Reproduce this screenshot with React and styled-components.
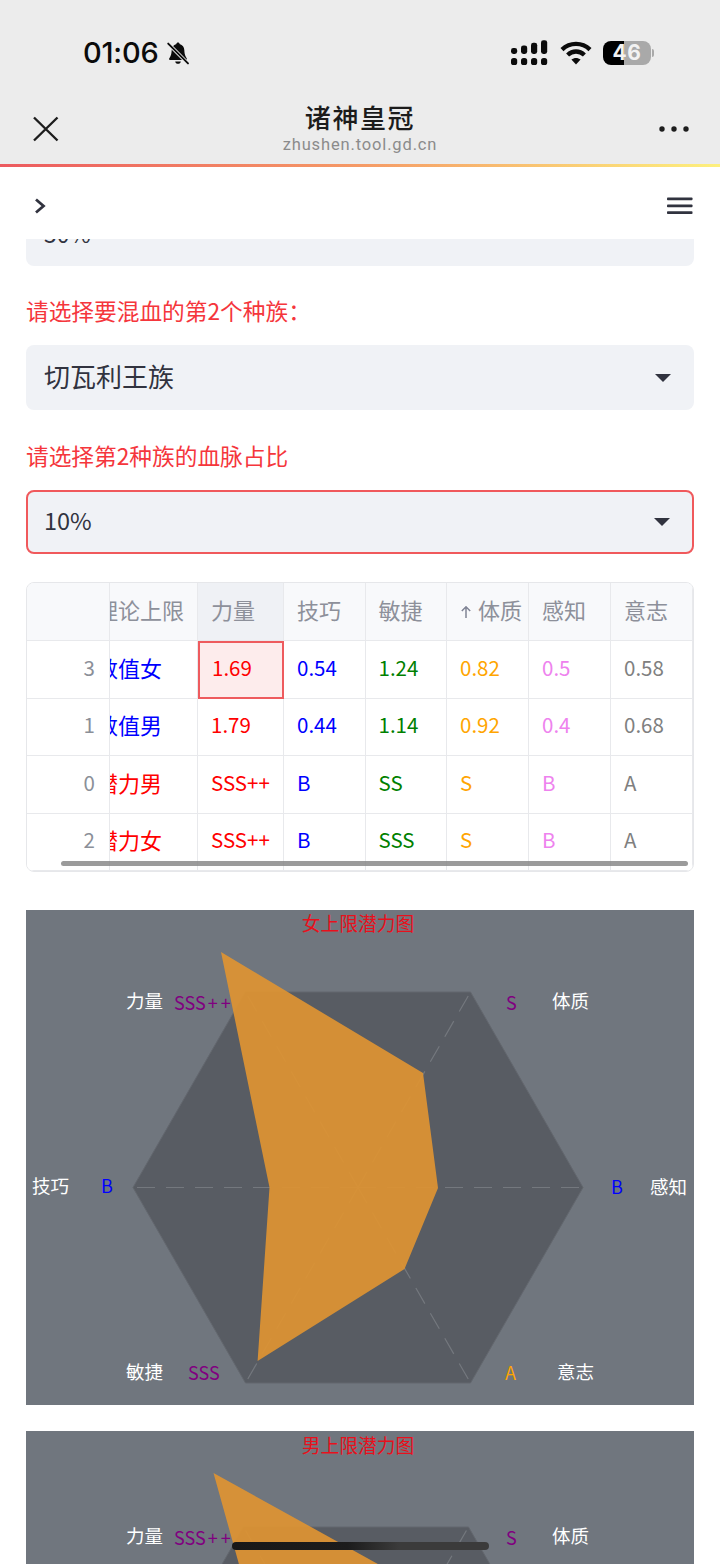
import React from 'react';
import styled, { createGlobalStyle } from 'styled-components';

const FONT = '"Noto Sans CJK SC", "Noto Sans", sans-serif';

const Global = createGlobalStyle`
  html, body { margin: 0; padding: 0; background: #fff; }
  body { font-family: ${FONT}; }
`;

const Page = styled.div`
  position: relative;
  width: 720px;
  height: 1564px;
  overflow: hidden;
  background: #fff;
  display: flex;
  flex-direction: column;
`;

const Chrome = styled.header`
  background: #ececec;
  flex: none;
`;
const StatusBar = styled.div`
  height: 96px;
  box-sizing: border-box;
  padding: 10px 66px 0 83px;
  display: flex;
  align-items: center;
  justify-content: space-between;
`;
const TimeGroup = styled.div`
  display: flex;
  align-items: center;
  gap: 7px;
`;
const Time = styled.span`
  font-family: Inter, sans-serif;
  font-weight: 500;
  font-size: 29px;
  line-height: 34px;
  letter-spacing: -0.2px;
  color: #0b0b0b;
`;
const StatusIcons = styled.div`
  display: flex;
  align-items: center;
  gap: 12px;
`;
const Battery = styled.div`
  position: relative;
  width: 48px;
  height: 24px;
  border-radius: 8px;
  overflow: hidden;
  background: linear-gradient(90deg, #000 0 21px, #a9a9a9 21px 100%);
  display: flex;
  align-items: center;
  justify-content: center;
  font-family: Inter, sans-serif;
  font-weight: 700;
  font-size: 21px;
  line-height: 24px;
  color: #f2f2f2;
  letter-spacing: 0.5px;
`;
const BatteryWrap = styled.div`
  display: flex;
  align-items: center;
  gap: 1px;
  margin-left: -1px;
`;
const BatteryCap = styled.div`
  width: 2px;
  height: 8px;
  border-radius: 0 2px 2px 0;
  background: #a9a9a9;
`;

const NavBar = styled.div`
  height: 68px;
  box-sizing: border-box;
  padding: 0 31px 2px 33px;
  display: flex;
  align-items: center;
  justify-content: space-between;
`;
const NavTitle = styled.div`
  display: flex;
  flex-direction: column;
  align-items: center;
  margin-left: 2px;
`;
const SiteName = styled.div`
  font-size: 26px;
  line-height: 34px;
  font-weight: 500;
  letter-spacing: 1.6px;
  color: #1c1c1c;
  margin-top: -4px;
`;
const SiteUrl = styled.div`
  font-family: Roboto, sans-serif;
  font-size: 16.5px;
  line-height: 20px;
  letter-spacing: 0.85px;
  color: #8b8b8b;
  margin-top: 1px;
`;
const ProgressLine = styled.div`
  height: 3px;
  flex: none;
  background: linear-gradient(90deg, #ec5a5f 0%, #f59a66 50%, #fdf07e 100%);
`;

const AppBar = styled.div`
  height: 72px;
  flex: none;
  box-sizing: border-box;
  padding: 6px 27px 0 34px;
  display: flex;
  align-items: center;
  justify-content: space-between;
  background: #fff;
`;

const Main = styled.main`
  padding: 0 26px;
  display: flex;
  flex-direction: column;
`;
const Clip = styled.div`
  height: 27px;
  overflow: hidden;
  display: flex;
  align-items: flex-end;
`;
const Select = styled.div`
  flex: none;
  width: 100%;
  box-sizing: border-box;
  height: ${p => p.$h || 65}px;
  padding: 0 ${p => (p.$active ? 22 : 23)}px 4px ${p => (p.$active ? 16 : 18)}px;
  border-radius: 8px;
  background: #f0f2f6;
  border: ${p => (p.$active ? '2px solid #f0595c' : 'none')};
  display: flex;
  align-items: center;
  justify-content: space-between;
  color: #31333f;
  font-size: ${p => p.$size || 26}px;
  line-height: 34px;
`;
const Caret = styled.span`
  width: 0;
  height: 0;
  margin-top: 4px;
  border-left: 8px solid transparent;
  border-right: 8px solid transparent;
  border-top: 8px solid #31333f;
`;
const Label = styled.div`
  margin-top: ${p => p.$top}px;
  margin-bottom: 19px;
  height: 28px;
  font-size: 22.7px;
  line-height: 26px;
  color: #f5363c;
  white-space: nowrap;
`;

const TableFrame = styled.div`
  position: relative;
  margin-top: 28px;
  height: 290px;
  box-sizing: border-box;
  border: 1px solid #e6e7ea;
  border-radius: 8px;
  overflow: hidden;
`;
const Grid = styled.div`
  display: grid;
  grid-template-columns: 83px 88px 86px 81.5px 81.5px 82px 82px 81.5px;
  grid-template-rows: 58px repeat(4, 57.5px);
`;
const Cell = styled.div`
  box-sizing: border-box;
  display: flex;
  align-items: center;
  justify-content: ${p => (p.$right ? 'flex-end' : 'flex-start')};
  padding: 0 ${p => (p.$right ? 14 : 0)}px 5px ${p => (p.$right ? 0 : 13)}px;
  border-right: 1.5px solid #e8e9ec;
  border-bottom: 1.5px solid #e8e9ec;
  white-space: nowrap;
  overflow: hidden;
  color: ${p => p.$color || '#31333f'};
  font-size: ${p => p.$size || 20.5}px;
  line-height: 30px;
  background: ${p => p.$bg || '#fff'};
`;
const SelectedCell = styled(Cell)`
  background: #fdecec;
  border: 2px solid #ee5b5e;
  padding-left: 12px;
`;
const NameCell = styled(Cell)`
  padding-left: 0;
  font-size: 22px;
  & > span { margin-left: -14px; flex: none; }
`;
const Scrollbar = styled.div`
  position: absolute;
  left: 34px;
  right: 5px;
  bottom: 5px;
  height: 5px;
  border-radius: 3px;
  background: rgba(130, 130, 130, 0.8);
`;

const ChartPanel = styled.section`
  flex: none;
  height: 495px;
  margin-top: ${p => p.$top}px;
  background: #70767e;
  & > svg { display: block; }
`;
const HomeBar = styled.div`
  position: absolute;
  left: 232px;
  top: 1542px;
  width: 257px;
  height: 8px;
  border-radius: 4px;
  background: linear-gradient(90deg, #181818 0%, #1c1c1c 45%, #3b3b3b 65%, #3b3b3b 100%);
`;

const BellOff = () => (
  <svg width="24" height="24" viewBox="0 0 24 24">
    <path d="M12 1.5c.9 0 1.5.6 1.6 1.4 3 .8 4.6 3.2 4.7 6.2.1 3 .6 5.3 1.6 6.8.7 1 1 1.5 1 2 0 .7-.5 1.1-1.3 1.1H4.4c-.8 0-1.3-.4-1.3-1.1 0-.5.3-1 1-2 1-1.5 1.5-3.8 1.6-6.8.1-3 1.7-5.4 4.7-6.2.1-.8.7-1.4 1.6-1.4Z" fill="#0b0b0b" />
    <path d="M9.2 20.4h5.6c-.2 1.4-1.4 2.3-2.8 2.3s-2.6-.9-2.8-2.3Z" fill="#0b0b0b" />
    <path d="M1.8 2.2 22 22.4" stroke="#ececec" strokeWidth="3.6" />
    <path d="M2.2 2.6 22 22.4" stroke="#0b0b0b" strokeWidth="1.9" strokeLinecap="round" />
  </svg>
);

const Signal = () => (
  <svg width="37" height="26" viewBox="0 0 37 26">
    {[0, 10, 20, 30].map((x, i) => (
      <g key={x} fill="#0b0b0b">
        <rect x={x} y={8 - i * 2.6} width="6.2" height={6 + i * 2.6} rx="2.4" />
        <rect x={x} y="18" width="6.2" height="7" rx="2.6" />
      </g>
    ))}
  </svg>
);

const Wifi = () => (
  <svg width="32" height="24" viewBox="0 0 32 24" fill="none" stroke="#0b0b0b" strokeWidth="4.4">
    <path d="M2 8.6C10 1 22 1 30 8.6" />
    <path d="M7.6 14c5-4.6 11.8-4.6 16.8 0" />
    <path d="M16 23.5 11.4 18.6c2.7-2.2 6.5-2.2 9.2 0Z" fill="#0b0b0b" stroke="none" />
  </svg>
);

const CloseIcon = () => (
  <svg width="26" height="26" viewBox="0 0 26 26" fill="none" stroke="#1d1d1d" strokeWidth="2.4">
    <path d="M1 1.5 24.5 24.5M24.5 1.5 1 24.5" />
  </svg>
);

const MoreIcon = () => (
  <svg width="30" height="6" viewBox="0 0 30 6" fill="#1d1d1d">
    <circle cx="3" cy="3" r="2.7" />
    <circle cx="15" cy="3" r="2.7" />
    <circle cx="27" cy="3" r="2.7" />
  </svg>
);

const ChevronIcon = () => (
  <svg width="12" height="16" viewBox="0 0 12 16" fill="none" stroke="#31333f" strokeWidth="2.8">
    <path d="M2 1.5 9.5 8 2 14.5" />
  </svg>
);

const MenuIcon = () => (
  <svg width="26" height="18" viewBox="0 0 26 18" fill="#31333f">
    <rect x="0" y="0.5" width="25.5" height="2.8" rx="0.8" />
    <rect x="0" y="7.4" width="25.5" height="2.8" rx="0.8" />
    <rect x="0" y="14.3" width="25.5" height="2.8" rx="0.8" />
  </svg>
);

const SortIcon = styled.svg`
  margin: 5px 6px 0 0;
  flex: none;
`;
const SortArrow = () => (
  <SortIcon width="12" height="14" viewBox="0 0 12 14" fill="none" stroke="#808495" strokeWidth="1.5">
    <path d="M6 13V2M1.8 6 6 1.8 10.2 6" />
  </SortIcon>
);

const C = { red: '#ff0000', blue: '#0000ff', green: '#008000', orange: '#ffa500', pink: '#ee82ee', gray: '#808080' };
const colors = [C.red, C.blue, C.green, C.orange, C.pink, C.gray];
const headers = ['力量', '技巧', '敏捷', '体质', '感知', '意志'];
const rows = [
  { idx: 3, name: '数值女', color: C.blue, vals: ['1.69', '0.54', '1.24', '0.82', '0.5', '0.58'], sel: true },
  { idx: 1, name: '数值男', color: C.blue, vals: ['1.79', '0.44', '1.14', '0.92', '0.4', '0.68'] },
  { idx: 0, name: '潜力男', color: C.red, vals: ['SSS++', 'B', 'SS', 'S', 'B', 'A'] },
  { idx: 2, name: '潜力女', color: C.red, vals: ['SSS++', 'B', 'SSS', 'S', 'B', 'A'] },
];

const HEAD_BG = '#f8f9fb';
const HEAD_FG = '#8d909a';

const DataTable = () => (
  <TableFrame>
    <Grid>
      <Cell $bg={HEAD_BG} />
      <NameCell $bg={HEAD_BG} $color={HEAD_FG}><span>理论上限</span></NameCell>
      {headers.map((h, i) => (
        <Cell key={h} $bg={i === 0 ? '#eff1f5' : HEAD_BG} $color={HEAD_FG} $size={22}>
          {h === '体质' && <SortArrow />}
          {h}
        </Cell>
      ))}
      {rows.map(r => (
        <React.Fragment key={r.idx}>
          <Cell $right $color="#8b8f98">{r.idx}</Cell>
          <NameCell $color={r.color}><span>{r.name}</span></NameCell>
          {r.vals.map((v, i) =>
            r.sel && i === 0 ? (
              <SelectedCell key={i} $color={colors[i]}>{v}</SelectedCell>
            ) : (
              <Cell key={i} $color={colors[i]}>{v}</Cell>
            )
          )}
        </React.Fragment>
      ))}
    </Grid>
    <Scrollbar />
  </TableFrame>
);

const WHITE = '#ffffff';
const PURPLE = '#800080';

const ChartText = styled.text`
  font-family: ${FONT};
  font-size: ${p => p.$size || 18}px;
`;

const Radar = ({ title, cx, cy, rx, ry, poly, titleY }) => {
  const verts = [
    [cx - rx / 2, cy - ry], [cx + rx / 2, cy - ry], [cx + rx, cy],
    [cx + rx / 2, cy + ry], [cx - rx / 2, cy + ry], [cx - rx, cy],
  ];
  const top = cy - ry;
  const labels = [
    [100, top + 16, '力量', WHITE, 18.5],
    [526, top + 16, '体质', WHITE, 18.5],
    [480, top + 18, 'S', PURPLE, 18],
    [6, cy + 5, '技巧', WHITE, 18.5],
    [75, cy + 5, 'B', C.blue, 18],
    [624, cy + 6, '感知', WHITE, 18.5],
    [585, cy + 6, 'B', C.blue, 18],
    [100, cy + 191, '敏捷', WHITE, 18.5],
    [162, cy + 192, 'SSS', PURPLE, 18],
    [531, cy + 191, '意志', WHITE, 18.5],
    [479, cy + 192, 'A', C.orange, 18],
  ];
  return (
    <svg width="668" height="495" viewBox="0 0 668 495">
      <polygon points={verts.map(v => v.join(',')).join(' ')} fill="#585c63" stroke="#63676e" strokeWidth="1" />
      {verts.map((v, i) => (
        <line key={i} x1={cx} y1={cy} x2={v[0]} y2={v[1]} stroke="#74787e" strokeWidth="1.2" strokeDasharray="18 11" />
      ))}
      {labels.map(([x, y, t, fill, size]) => (
        <ChartText key={t + x} x={x} y={y} fill={fill} $size={size}>{t}</ChartText>
      ))}
      <ChartText x="148" y={top + 18} fill={PURPLE} $size={18}>
        SSS<tspan dx="2" letterSpacing="3">++</tspan>
      </ChartText>
      <polygon points={poly} fill="rgb(222,148,50)" fillOpacity="0.92" />
      <ChartText x="332" y={titleY} fill="#e8101c" $size={18.8} textAnchor="middle">{title}</ChartText>
    </svg>
  );
};

export default function App() {
  return (
    <Page>
      <Global />
      <Chrome>
        <StatusBar>
          <TimeGroup>
            <Time>01:06</Time>
            <BellOff />
          </TimeGroup>
          <StatusIcons>
            <Signal />
            <Wifi />
            <BatteryWrap>
              <Battery>46</Battery>
              <BatteryCap />
            </BatteryWrap>
          </StatusIcons>
        </StatusBar>
        <NavBar>
          <CloseIcon />
          <NavTitle>
            <SiteName>诸神皇冠</SiteName>
            <SiteUrl>zhushen.tool.gd.cn</SiteUrl>
          </NavTitle>
          <MoreIcon />
        </NavBar>
      </Chrome>
      <ProgressLine />
      <AppBar>
        <ChevronIcon />
        <MenuIcon />
      </AppBar>
      <Main>
        <Clip>
          <Select $h={62} $size={23}>50%</Select>
        </Clip>
        <Label $top={32}>请选择要混血的第2个种族：</Label>
        <Select>切瓦利王族<Caret /></Select>
        <Label $top={33}>请选择第2种族的血脉占比</Label>
        <Select $h={64} $active $size={23.5}>10%<Caret /></Select>
        <DataTable />
        <ChartPanel $top={38}>
          <Radar
            title="女上限潜力图"
            titleY={21}
            cx={332}
            cy={277.5}
            rx={225}
            ry={195.5}
            poly="195,42 397,163 412,278 378.5,359 231.6,451 243.5,277.5"
          />
        </ChartPanel>
        <ChartPanel $top={26}>
          <Radar
            title="男上限潜力图"
            titleY={22}
            cx={330}
            cy={291}
            rx={225}
            ry={195}
            poly="187.5,42 397,158 412,291 378,372 231,465 257,291"
          />
        </ChartPanel>
      </Main>
      <HomeBar />
    </Page>
  );
}
